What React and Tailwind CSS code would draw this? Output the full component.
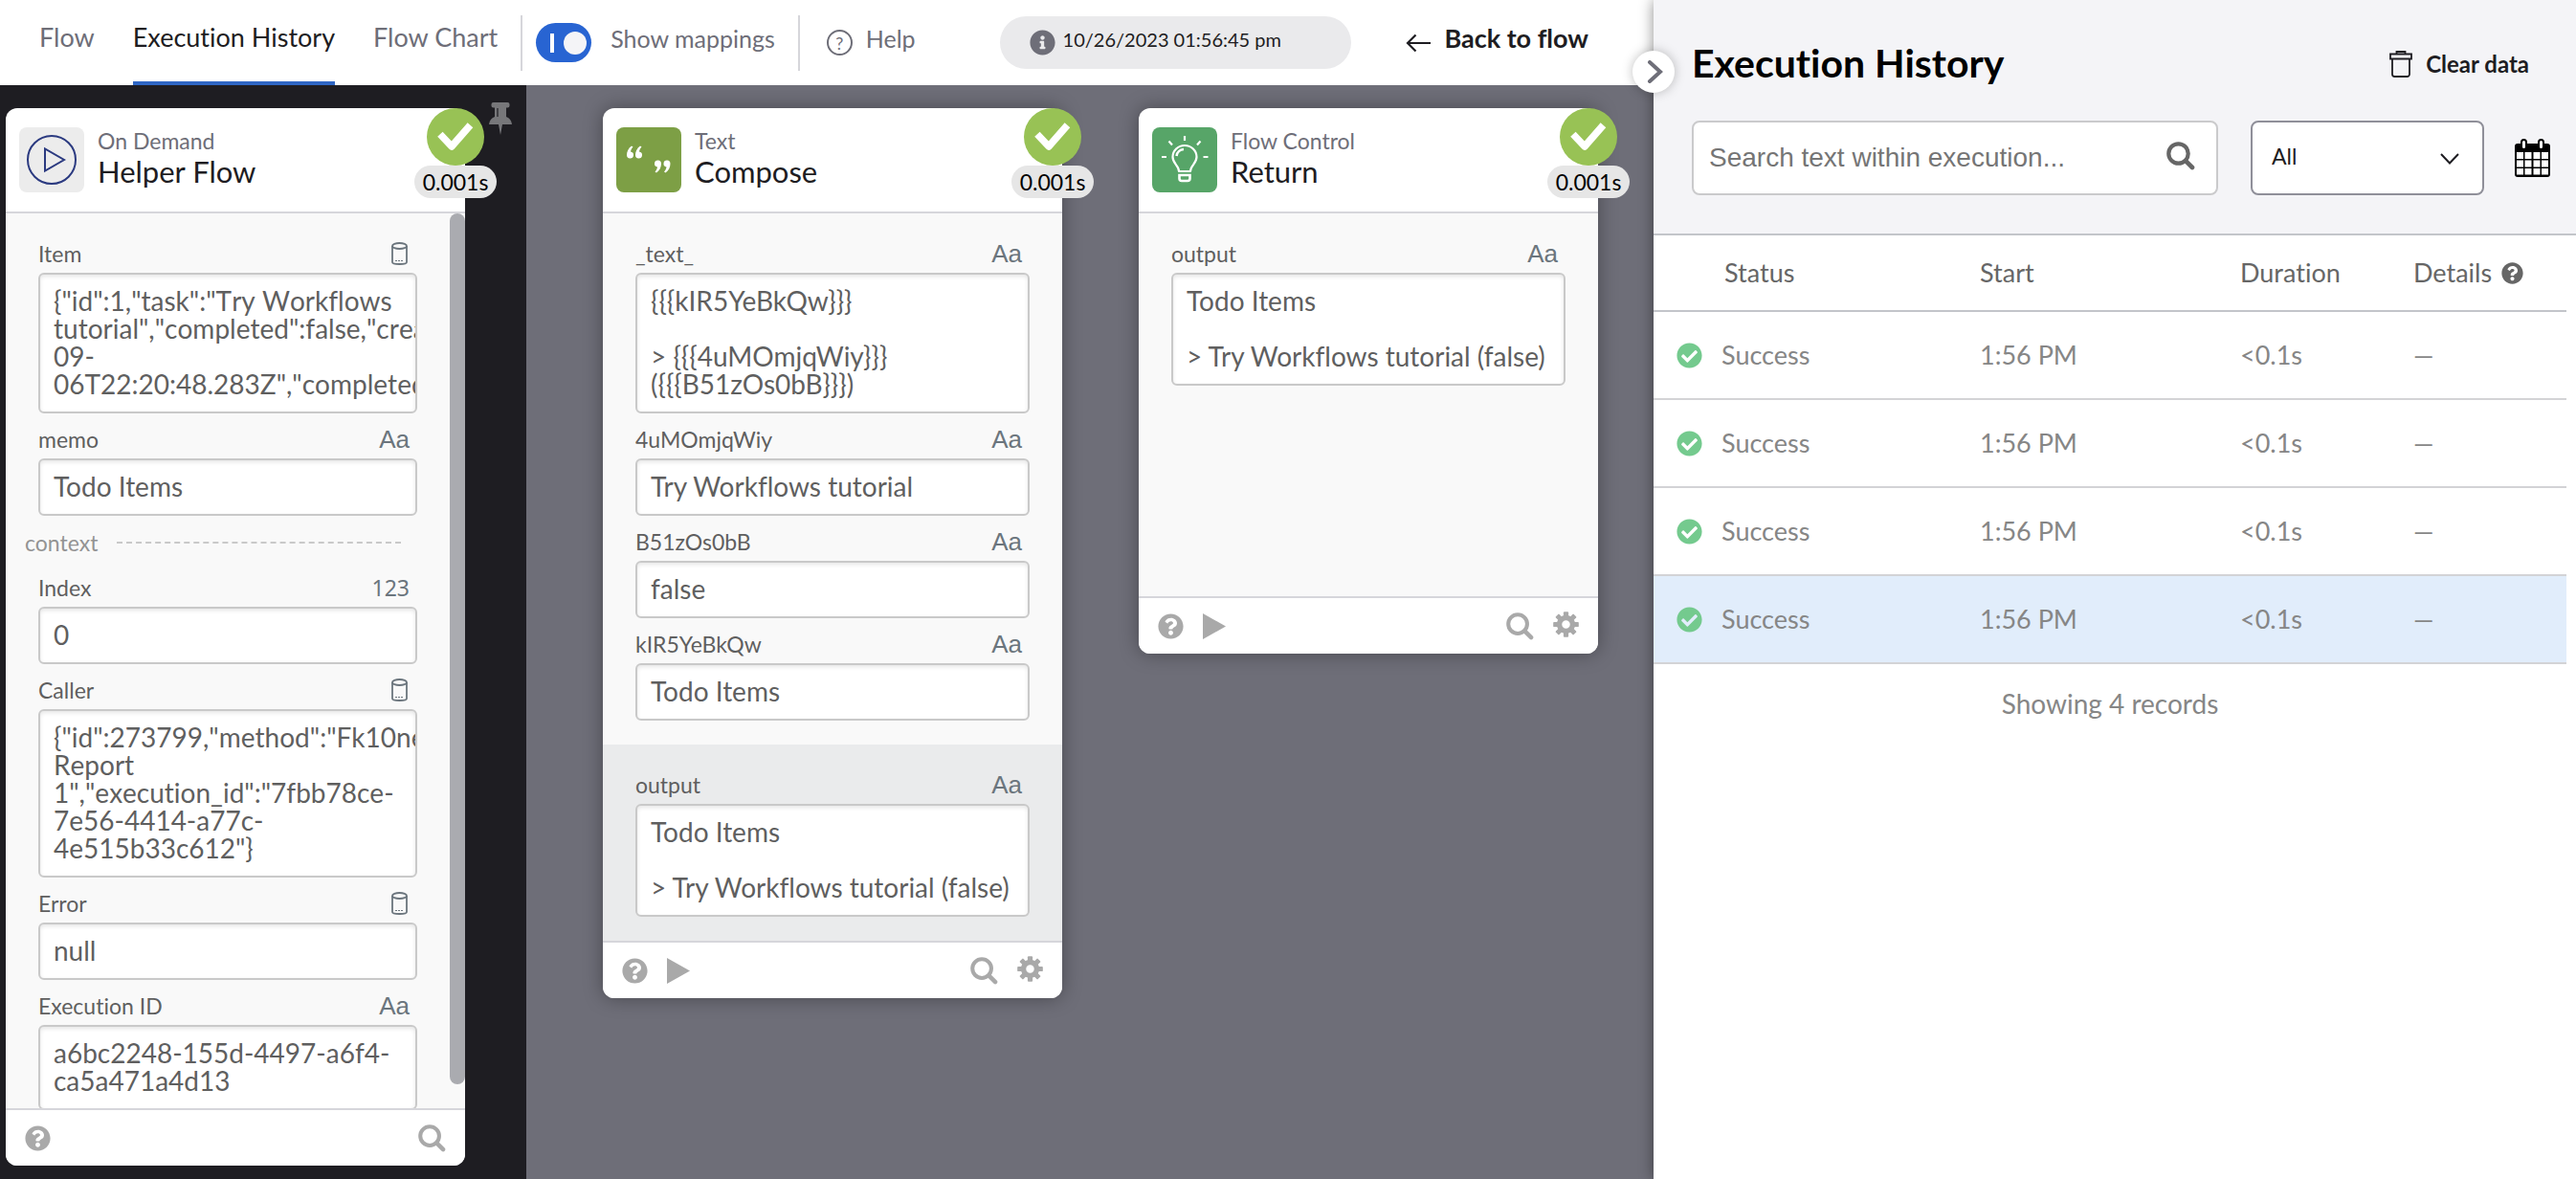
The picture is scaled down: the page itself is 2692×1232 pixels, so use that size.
import React, { useState } from 'react';
import { FaCheckCircle, FaInfoCircle, FaQuestionCircle } from 'react-icons/fa';

const workflowCards = [
  {
    kind: 'Text',
    title: 'Compose',
    icon: 'quotes',
    fields: [
      { id: 'text', label: '_text_', type: 'text', value: '{{{kIR5YeBkQw}}}\n\n> {{{4uMOmjqWiy}}}\n({{{B51zOs0bB}}})' },
      { id: 'task', label: '4uMOmjqWiy', type: 'text', value: 'Try Workflows tutorial' },
      { id: 'done', label: 'B51zOs0bB', type: 'text', value: 'false' },
      { id: 'title', label: 'kIR5YeBkQw', type: 'text', value: 'Todo Items' },
    ],
    outputs: [
      { id: 'compose-output', label: 'output', type: 'text', value: 'Todo Items\n\n> Try Workflows tutorial (false)' },
    ],
  },
  {
    kind: 'Flow Control',
    title: 'Return',
    icon: 'bulb',
    fields: [
      { id: 'return-output', label: 'output', type: 'text', value: 'Todo Items\n\n> Try Workflows tutorial (false)' },
    ],
    outputs: [],
  },
];

const helperFields = [
  {
    id: 'item',
    label: 'Item',
    type: 'object',
    value:
      '{"id":1,"task":"Try Workflows\ntutorial","completed":false,"created_at":"2023-\n09-\n06T22:20:48.283Z","completed_at":""}',
  },
  { id: 'memo', label: 'memo', type: 'text', value: 'Todo Items' },
];

const contextFields = [
  { id: 'index', label: 'Index', type: 'number', value: '0' },
  {
    id: 'caller',
    label: 'Caller',
    type: 'object',
    value:
      '{"id":273799,"method":"Fk10new","flow":"\nReport\n1","execution_id":"7fbb78ce-\n7e56-4414-a77c-\n4e515b33c612"}',
  },
  { id: 'error', label: 'Error', type: 'object', value: 'null' },
  { id: 'execution-id', label: 'Execution ID', type: 'text', value: 'a6bc2248-155d-4497-a6f4-\nca5a471a4d13' },
];

const records = [1, 2, 3, 4].map((id) => ({ id, status: 'Success', start: '1:56 PM', duration: '<0.1s', details: '—' }));

/* Icons */

function SearchIcon({ className }) {
  return (
    <svg className={className} viewBox="0 0 30 30" fill="none" stroke="currentColor" aria-hidden="true">
      <circle cx="12.5" cy="12.5" r="10.2" strokeWidth="4.2" />
      <path d="M20 20l7 7" strokeWidth="4.6" strokeLinecap="round" />
    </svg>
  );
}

function GearIcon({ className }) {
  return (
    <svg className={className} viewBox="-14 -14 28 28" fill="currentColor" aria-hidden="true">
      <circle r="7.2" fill="none" stroke="currentColor" strokeWidth="5.6" />
      {[0, 45, 90, 135, 180, 225, 270, 315].map((deg) => (
        <rect key={deg} x="-2.7" y="-13.8" width="5.4" height="6" rx="1" transform={`rotate(${deg})`} />
      ))}
    </svg>
  );
}

function PlayIcon({ className }) {
  return (
    <svg className={className} viewBox="0 0 24 27" fill="currentColor" aria-hidden="true">
      <path d="M0 0l24 13.5L0 27z" />
    </svg>
  );
}

function PinIcon({ className }) {
  return (
    <svg className={className} viewBox="0 0 24 34" fill="#77777a" aria-hidden="true">
      <path d="M4.5 0h15a2 2 0 0 1 2 2v1.5a2 2 0 0 1-2 2H18v9.5c3.5 1.5 5.5 4 6 8H0c.5-4 2.5-6.5 6-8V5.5H4.5a2 2 0 0 1-2-2V2a2 2 0 0 1 2-2z" />
      <path d="M10 23h4l-2 11z" />
      <path d="M9 6v9" stroke="#1e1d22" strokeWidth="1.2" />
    </svg>
  );
}

function PlayTile() {
  return (
    <svg className="size-[68px] shrink-0 rounded-lg bg-[#ececec]" viewBox="0 0 68 68" fill="none" stroke="#2b3a80" strokeWidth="2" aria-hidden="true">
      <circle cx="34" cy="34" r="25" />
      <path d="M27 22.5v23L47 34z" />
    </svg>
  );
}

function QuotesTile() {
  return (
    <svg className="size-[68px] shrink-0 rounded-lg bg-[#7d9f45]" viewBox="0 0 68 68" fill="#fff" aria-hidden="true">
      <path d="M16 19.5c-3.5 2.5-5 6-5 9.5a3.5 3.5 0 1 0 4-3.5c.2-1.8 1-3.4 2.5-5z" />
      <path d="M25 19.5c-3.5 2.5-5 6-5 9.5a3.5 3.5 0 1 0 4-3.5c.2-1.8 1-3.4 2.5-5z" />
      <path d="M42 47.5c3.5-2.5 5-6 5-9.5a3.5 3.5 0 1 0-4 3.5c-.2 1.8-1 3.4-2.5 5z" />
      <path d="M51.5 47.5c3.5-2.5 5-6 5-9.5a3.5 3.5 0 1 0-4 3.5c-.2 1.8-1 3.4-2.5 5z" />
    </svg>
  );
}

function BulbTile() {
  return (
    <svg className="size-[68px] shrink-0 rounded-lg bg-[#57a568]" viewBox="0 0 68 68" fill="none" stroke="#fff" strokeWidth="2.2" aria-hidden="true">
      <path d="M28 46c0-6-6.5-8-6.5-15a12.5 12 0 0 1 25 0c0 7-6.5 9-6.5 15z" strokeLinejoin="round" />
      <path d="M25.5 30a8.5 8 0 0 1 7.5-7" strokeWidth="2.6" />
      <path d="M28.5 50h11v3.5a2.5 2.5 0 0 1-2.5 2.5h-6a2.5 2.5 0 0 1-2.5-2.5z" strokeWidth="2.6" />
      <path d="M34 9v5M17.5 14.5l3.5 4M50.5 14.5l-3.5 4M10 31h5M53.5 31h5" />
    </svg>
  );
}

function DatabaseIcon() {
  return (
    <svg className="mr-[2px] h-6 w-[17px]" viewBox="0 0 17 24" fill="none" stroke="#6b757d" strokeWidth="1.8" aria-hidden="true">
      <ellipse cx="8.5" cy="4" rx="7.5" ry="3" />
      <path d="M1 4v17c0 1.2 3.5 2 7.5 2s7.5-.8 7.5-2V4" />
      <path d="M4 19.5h9" strokeWidth="1" strokeDasharray="2 1" />
    </svg>
  );
}

function TrashIcon() {
  return (
    <svg className="h-7 w-6" viewBox="0 0 24 28" fill="none" stroke="currentColor" strokeWidth="1.8" aria-hidden="true">
      <path d="M1 3.5h22v5H1zM7.5 3.5V1h9v2.5M3 8.5v16A2.5 2.5 0 0 0 5.5 27h13a2.5 2.5 0 0 0 2.5-2.5v-16" />
    </svg>
  );
}

function CalendarIcon() {
  return (
    <svg className="h-10 w-[37px]" viewBox="0 0 37 40" aria-hidden="true">
      <rect y="5" width="37" height="35" rx="3" fill="#000" />
      <g fill="#fff">
        {[14, 22.5, 31].map((y) =>
          [2, 10.5, 19.5, 28].map((x) => <rect key={`${x}-${y}`} x={x} y={y} width="7" height={y === 31 ? 6.5 : 7} />)
        )}
      </g>
      <g fill="#fff" stroke="#000" strokeWidth="2">
        <rect x="7" y="1" width="5" height="10" rx="2.5" />
        <rect x="25" y="1" width="5" height="10" rx="2.5" />
      </g>
    </svg>
  );
}

const tiles = { play: PlayTile, quotes: QuotesTile, bulb: BulbTile };

/* Cards */

function TypeMark({ type }) {
  if (type === 'object') return <DatabaseIcon />;
  if (type === 'number') {
    return <span className="font-['Noto_Sans',sans-serif] text-[23px] leading-6 text-[#6b757d]">123</span>;
  }
  return <span className="font-['Liberation_Sans',sans-serif] text-[26px] leading-6 text-[#6b757d]">Aa</span>;
}

function Field({ field }) {
  // Kerning hides the commas between quotes in JSON values
  const kerning = field.type === 'object' ? '[font-kerning:none]' : '';
  return (
    <div>
      <div className="flex h-[47px] items-end justify-between pr-2 pb-2">
        <label htmlFor={field.id} className="text-[23px] leading-6 text-[#5f5f5f]">
          {field.label}
        </label>
        <TypeMark type={field.type} />
      </div>
      <textarea
        id={field.id}
        readOnly
        wrap="off"
        rows={field.value.split('\n').length}
        value={field.value}
        className={`block w-full resize-none overflow-hidden rounded-md border-2 border-[#c9c9c9] bg-white px-[14px] pt-[13px] pb-[14px] text-[28px] leading-[29px] whitespace-pre text-[#5f5f5f] shadow-[inset_0_2px_4px_rgba(0,0,0,0.1)] outline-none ${kerning}`}
      />
    </div>
  );
}

function CardHeader({ kind, title, icon }) {
  const Tile = tiles[icon];
  return (
    <header className="relative flex shrink-0 items-center gap-[14px] border-b-2 border-[#d6d6db] px-[14px] py-5">
      <Tile />
      <div className="pb-1">
        <p className="text-[23px] leading-7 text-[#6e6e78]">{kind}</p>
        <h2 className="text-[31px] leading-9 text-[#1e1d22]">{title}</h2>
      </div>
      {/* Result badge hangs over the card edge */}
      <div className="absolute top-0 -right-[33px] z-10 flex w-[86px] flex-col items-center">
        <svg className="size-[60px]" viewBox="0 0 60 60" aria-hidden="true">
          <circle cx="30" cy="30" r="30" fill="#98c255" />
          <path d="M16.5 30l9.5 10 17-19.5" fill="none" stroke="#fff" strokeWidth="7.5" strokeLinejoin="round" strokeLinecap="square" />
        </svg>
        <span className="w-full rounded-full bg-[#e6e6e6] text-center text-[23px] leading-[34px] text-black">0.001s</span>
      </div>
    </header>
  );
}

function CardFooter({ runnable }) {
  return (
    <footer className="flex h-[60px] shrink-0 items-center justify-between rounded-b-xl border-t-2 border-[#d6d6db] bg-white px-5 text-[#a9a9a9]">
      <div className="flex items-center gap-5">
        <button type="button" aria-label="Help">
          <FaQuestionCircle className="size-[27px]" />
        </button>
        {runnable && (
          <button type="button" aria-label="Run">
            <PlayIcon className="h-[27px] w-6" />
          </button>
        )}
      </div>
      <div className="flex items-center gap-5">
        <button type="button" aria-label="Search">
          <SearchIcon className="size-[29px]" />
        </button>
        {runnable && (
          <button type="button" aria-label="Settings" className="pb-1">
            <GearIcon className="size-[27px]" />
          </button>
        )}
      </div>
    </footer>
  );
}

function Card({ card }) {
  return (
    <article className="flex w-[480px] shrink-0 flex-col rounded-xl bg-white shadow-[0_0_20px_rgba(0,0,0,0.35)]">
      <CardHeader kind={card.kind} title={card.title} icon={card.icon} />
      <div className="flex min-h-[400px] flex-col bg-[#f9f9f9]">
        <div className="px-[34px] pt-[15px] pb-[25px]">
          {card.fields.map((field) => (
            <Field key={field.id} field={field} />
          ))}
        </div>
        {card.outputs.length > 0 && (
          <div className="bg-[#eaebec] px-[34px] pt-[15px] pb-[25px]">
            {card.outputs.map((field) => (
              <Field key={field.id} field={field} />
            ))}
          </div>
        )}
      </div>
      <CardFooter runnable />
    </article>
  );
}

function HelperCard() {
  return (
    <article className="flex w-[480px] shrink-0 flex-col rounded-xl bg-white">
      <CardHeader kind="On Demand" title="Helper Flow" icon="play" />
      <div className="relative min-h-0 flex-1 overflow-hidden bg-[#f9f9f9] pt-[15px] pr-[50px] pl-[34px]">
        {helperFields.map((field) => (
          <Field key={field.id} field={field} />
        ))}
        <div className="-ml-[14px] flex h-12 items-center gap-5 pt-2 pr-[17px]">
          <span className="text-[23px] leading-6 text-[#939393]">context</span>
          <span className="flex-1 border-t-2 border-dashed border-[#c9c9c9]" />
        </div>
        {contextFields.map((field) => (
          <Field key={field.id} field={field} />
        ))}
        <div className="absolute top-0 right-0 bottom-[25px] w-4 rounded-full bg-[#aaabb0]" />
      </div>
      <CardFooter />
    </article>
  );
}

/* Top bar */

function TopBar() {
  const [mappings, setMappings] = useState(true);
  return (
    <header className="flex h-[89px] shrink-0 items-center bg-white pr-[68px] pl-[41px] text-[#6e6e78]">
      <nav className="flex gap-10 self-stretch text-[27px]">
        <a href="#flow" className="flex items-center pb-[10px]">Flow</a>
        <a href="#history" className="flex items-center border-b-4 border-[#2f66c5] pb-[6px] text-[#1e1d22]">Execution History</a>
        <a href="#chart" className="flex items-center pb-[10px]">Flow Chart</a>
      </nav>
      <span className="mr-[14px] ml-6 h-[58px] w-[2px] bg-[#d6d6db]" />
      <label className="flex cursor-pointer items-center gap-5 text-[25px]">
        <input
          type="checkbox"
          className="sr-only"
          checked={mappings}
          onChange={(e) => setMappings(e.target.checked)}
        />
        <span className={`flex h-[41px] w-[58px] items-center justify-between rounded-full px-[5px] ${mappings ? 'bg-[#2864d2]' : 'flex-row-reverse bg-stone-400'}`}>
          <span className="ml-[10px] h-5 w-1 bg-white" />
          <span className="size-6 rounded-full bg-[#f4f4f7]" />
        </span>
        <span className="pb-2">Show mappings</span>
      </label>
      <span className="mr-7 ml-6 h-[58px] w-[2px] bg-[#d6d6db]" />
      <a href="#help" className="flex items-center gap-[14px] text-[25px]">
        <span className="flex size-[27px] items-center justify-center rounded-full border-2 border-[#6e6e78] text-lg">?</span>
        <span className="pb-2">Help</span>
      </a>
      <div className="ml-[88px] flex h-[55px] w-[367px] items-center gap-2 rounded-full bg-[#eaeaec] pl-[31px] text-xl text-[#1e1d22]">
        <FaInfoCircle className="size-[27px] text-[#6e6e78]" />
        <span className="pb-2">10/26/2023 01:56:45 pm</span>
      </div>
      <a href="#back" className="ml-auto flex items-center gap-[14px] text-[27px] font-bold text-[#1e1d22]">
        <svg className="h-5 w-[26px]" viewBox="0 0 26 20" fill="none" stroke="currentColor" strokeWidth="2.2" aria-hidden="true">
          <path d="M26 10H2M10.5 1.5L2 10l8.5 8.5" />
        </svg>
        <span className="pb-2">Back to flow</span>
      </a>
    </header>
  );
}

/* Right panel */

function HistoryPanel() {
  return (
    <aside className="relative flex w-[964px] shrink-0 flex-col bg-white shadow-[0_0_14px_rgba(0,0,0,0.45)]">
      <button
        type="button"
        aria-label="Collapse panel"
        className="absolute top-[53px] -left-[22px] flex size-11 items-center justify-center rounded-full bg-white shadow-[0_0_12px_rgba(0,0,0,0.25)]"
      >
        <svg className="ml-1 h-6 w-[18px]" viewBox="0 0 18 24" fill="none" stroke="#6e6e78" strokeWidth="4" strokeLinecap="round" aria-hidden="true">
          <path d="M3 2l11 10L3 22" />
        </svg>
      </button>
      <div className="border-b-2 border-[#c3c5ca] bg-[#f4f4f7] pt-9 pr-[27px] pb-10 pl-10">
        <div className="flex h-[60px] items-center justify-between pr-[22px]">
          <h1 className="text-[41px] font-bold text-black">Execution History</h1>
          <button type="button" className="flex items-center gap-[14px] pt-[2px] text-2xl font-bold text-[#1e1d22]">
            <TrashIcon />
            Clear data
          </button>
        </div>
        <div className="mt-[30px] flex items-center">
          <div className="relative min-w-0 flex-1">
            <input
              type="text"
              aria-label="Search text within execution"
              placeholder="Search text within execution..."
              className="block h-[78px] w-full rounded-lg border-2 border-[#cacacc] bg-white pr-16 pl-4 font-['Liberation_Sans',sans-serif] text-[28px] outline-none placeholder:text-[#757575]"
            />
            <SearchIcon className="pointer-events-none absolute top-[22px] right-6 size-[30px] text-[#666]" />
          </div>
          <div className="relative ml-[34px] w-[244px]">
            <select
              aria-label="Status filter"
              className="block h-[78px] w-full appearance-none rounded-lg border-2 border-[#8f8f99] bg-white pb-1 pl-5 text-[23px] text-[#1e1d22] outline-none"
            >
              <option>All</option>
            </select>
            <svg className="pointer-events-none absolute top-[34px] right-[26px] h-3 w-5" viewBox="0 0 20 12" fill="none" stroke="#1e1d22" strokeWidth="2" aria-hidden="true">
              <path d="M1 1l9 9.5L19 1" />
            </svg>
          </div>
          <button type="button" aria-label="Pick dates" className="ml-8">
            <CalendarIcon />
          </button>
        </div>
      </div>
      <table className="w-full table-fixed text-left">
        <thead>
          <tr className="h-[79px] border-b-2 border-[#c3c5ca] text-[27px] text-[#666]">
            <th scope="col" className="w-[341px] pl-[74px] font-normal">Status</th>
            <th scope="col" className="w-[272px] font-normal">Start</th>
            <th scope="col" className="w-[181px] font-normal">Duration</th>
            <th scope="col" className="pr-[10px] font-normal">
              <span className="flex items-center gap-[10px]">
                Details
                <FaQuestionCircle className="size-[23px]" />
              </span>
            </th>
          </tr>
        </thead>
        <tbody>
          {records.map((record) => (
            <tr
              key={record.id}
              className={`h-[92px] border-b-2 border-[#d3d3d6] text-[27px] text-[#868686] ${record.id === records.length ? 'bg-[#e1edfb]' : ''}`}
            >
              <td className="pl-6">
                <span className="flex items-center gap-5">
                  <FaCheckCircle className="size-[27px] text-[#74ca8e]" />
                  {record.status}
                </span>
              </td>
              <td>{record.start}</td>
              <td>{record.duration}</td>
              <td className="border-r-[10px] border-r-white">{record.details}</td>
            </tr>
          ))}
        </tbody>
      </table>
      <p className="pt-5 pr-[10px] text-center text-[28px] text-[#868686]">Showing {records.length} records</p>
    </aside>
  );
}

export default function App() {
  return (
    <div className="flex h-screen overflow-hidden bg-[#6e6e78] font-[Lato,'Liberation_Sans',sans-serif] [font-variant-ligatures:none]">
      <div className="flex min-w-0 flex-1 flex-col">
        <TopBar />
        <main className="flex min-h-0 flex-1">
          <section className="flex w-[550px] shrink-0 items-stretch gap-[25px] bg-[#1e1d22] pt-6 pb-[14px] pl-[6px]">
            <HelperCard />
            <button type="button" aria-label="Pin card" className="-mt-[6px] self-start">
              <PinIcon className="h-[34px] w-6" />
            </button>
          </section>
          <section className="flex min-w-0 flex-1 items-start gap-20 overflow-hidden pt-6 pl-20">
            {workflowCards.map((card) => (
              <Card key={card.title} card={card} />
            ))}
          </section>
        </main>
      </div>
      <HistoryPanel />
    </div>
  );
}
